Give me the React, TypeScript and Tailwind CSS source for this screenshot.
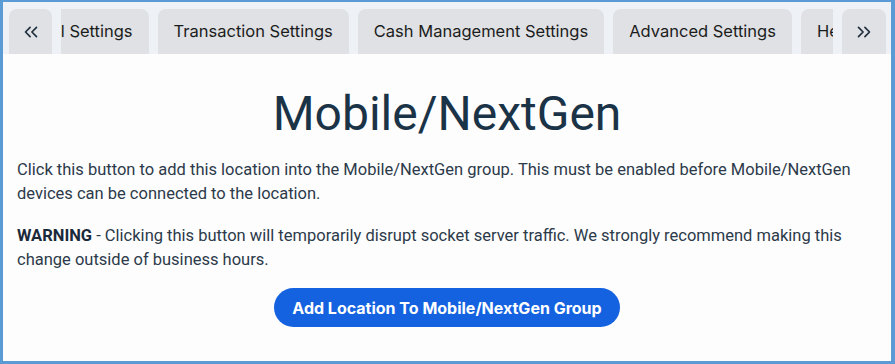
import { ChevronsLeft, ChevronsRight } from "lucide-react";

const tabs = [
  "General Settings",
  "Transaction Settings",
  "Cash Management Settings",
  "Advanced Settings",
  "Help",
];

export default function App() {
  return (
    <div className="h-[364px] w-[895px] overflow-hidden border-[#5b9bd5] border-t-2 border-l-[3px] border-r-[4px] border-b-[3px] bg-[#fdfdfd]">
      <div className="flex h-[52px] items-end gap-[9px] bg-[#eef1f5] pl-[6px] pr-[5px] font-['Inter',sans-serif] text-[16.5px] text-[#1c1c1c]">
        <button className="flex h-[45px] w-[43px] shrink-0 items-center justify-center rounded-t-[8px] bg-[#dfe1e4] text-[#1f2d3d]">
          <ChevronsLeft size={22} strokeWidth={1.8} />
        </button>
        <div className="flex min-w-0 flex-1 overflow-hidden">
          <div className="ml-[-73px] flex shrink-0 gap-[9px]">
            {tabs.map((t) => (
              <div
                key={t}
                className="flex h-[45px] shrink-0 items-center whitespace-nowrap rounded-t-[8px] bg-[#dfe1e4] px-4"
              >
                {t}
              </div>
            ))}
          </div>
        </div>
        <button className="flex h-[45px] w-[44px] shrink-0 items-center justify-center rounded-t-[8px] bg-[#dfe1e4] text-[#1f2d3d]">
          <ChevronsRight size={22} strokeWidth={1.8} />
        </button>
      </div>

      <div className="px-[14px] font-['Roboto',sans-serif] text-[16.5px] leading-6 text-[#2c3a4a]">
        <h1 className="mt-[30px] text-center text-[48px] leading-[60px] text-[#1b3347]">
          Mobile/NextGen
        </h1>
        <p className="mt-[14px]">
          Click this button to add this location into the Mobile/NextGen group. This must be enabled before
          Mobile/NextGen devices can be connected to the location.
        </p>
        <p className="mt-[18px]">
          <span className="font-bold text-[#1b2a3a]">WARNING</span> - Clicking this button will temporarily
          disrupt socket server traffic. We strongly recommend making this change outside of business hours.
        </p>
        <div className="mt-[16px] flex justify-center">
          <button className="h-[39px] rounded-full bg-[#1462e0] px-[18px] font-['Inter',sans-serif] text-[16px] font-bold text-white">
            Add Location To Mobile/NextGen Group
          </button>
        </div>
      </div>
    </div>
  );
}
